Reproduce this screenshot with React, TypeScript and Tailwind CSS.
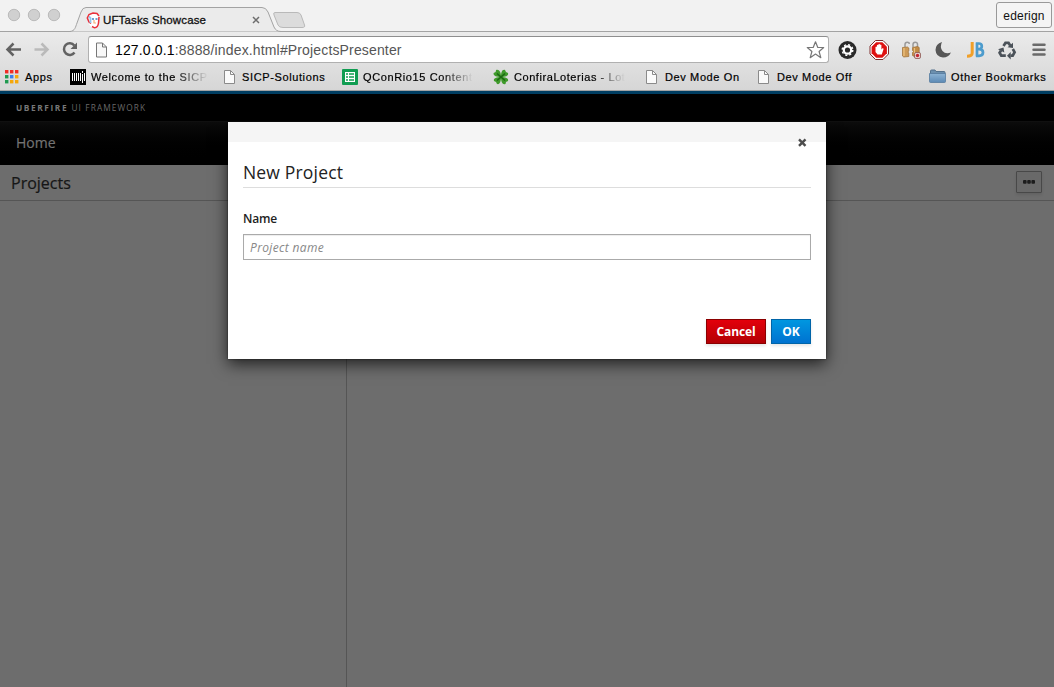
import React from 'react';

function PageIcon() {
  return (
    <svg width="16" height="16" viewBox="0 0 16 16" className="shrink-0">
      <path d="M2.500 1.500H8.500l4 4v9H2.500z" fill="#fafafa" stroke="#8a8a8a" />
      <path d="M8.500 1.500v4h4" fill="none" stroke="#8a8a8a" />
    </svg>
  );
}

function AppsIcon() {
  const colors = ['#f02c26', '#f02c26', '#f02c26', '#1f9a50', '#3b7ded', '#f5a70a', '#1f9a50', '#f5a70a', '#f5a70a'];
  return (
    <svg width="14" height="14" viewBox="0 0 14 14" className="shrink-0">
      {colors.map((c, i) => (
        <rect key={i} x={(i % 3) * 5} y={Math.floor(i / 3) * 5} width="3.4" height="3.4" fill={c} />
      ))}
    </svg>
  );
}

function MitIcon() {
  return (
    <svg width="16" height="16" viewBox="0 0 16 16" className="shrink-0">
      <rect width="16" height="16" fill="#000" />
      <path d="M2.500 4v8M4.500 4v8M6.500 4v8M8.500 4v8M10.500 4v8M12.500 2v2M12.500 5v9M14.500 4v8" stroke="#fff" strokeWidth="1" />
    </svg>
  );
}

function SheetIcon() {
  return (
    <svg width="16" height="16" viewBox="0 0 16 16" className="shrink-0">
      <rect width="16" height="16" rx="1" fill="#109d52" />
      <rect x="3" y="3" width="10" height="10" fill="#fff" />
      <path d="M4 5h2M7 5h5M4 8h2M7 8h5M4 11h2M7 11h5" stroke="#109d52" strokeWidth="1.700" />
    </svg>
  );
}

function CloverIcon() {
  return (
    <svg width="16" height="16" viewBox="0 0 16 16" className="shrink-0">
      <path d="M8 8C4 8 0 7 .6 4l2-1 .5-2c3-1 5 2 4.900 7zM8 8c0-4 1-8 4-7l1 2 2 1c1 3-3 4-7 4zM8 8c4 0 8 1 7 4l-2 1-.5 2c-3 1-4.500-2-4.500-7zM8 8c0 4-1 8-4 7l-1-2-2-1C0 9 4 8 8 8z" fill="#3f9a2b" />
      <path d="M4 4.500l8 7M12 4.500l-8 7" stroke="#1c6912" strokeWidth="1.600" />
    </svg>
  );
}

function FolderIcon() {
  return (
    <svg width="17" height="16" viewBox="0 0 17 16" className="shrink-0">
      <defs>
        <linearGradient id="folder" x1="0" y1="0" x2="0" y2="1">
          <stop offset="0" stopColor="#8db3d4" />
          <stop offset="1" stopColor="#5b89b4" />
        </linearGradient>
      </defs>
      <path d="M1.500 4V2q0-1 1-1h3.500l1 1.500h8q1 0 1 1V5h-14.500z" fill="#6b8fae" stroke="#54718c" />
      <path d="M.5 4.500h16v8q0 1-1 1h-14q-1 0-1-1z" fill="url(#folder)" stroke="#557b9e" strokeWidth=".8" />
    </svg>
  );
}

function TabStrip() {
  return (
    <div className="relative flex h-[32px] bg-[#f2f2f2]">
      <svg width="310" height="32" viewBox="0 0 310 32" className="absolute left-0 top-0">
        <path d="M70 31.500C75 31 75.500 27 77 23L81 12Q82.500 7.500 86 7.500H262Q266 7.500 268 12L274 27Q276 31.500 281 31.500V32H70z" fill="#ebebeb" stroke="#a3a3a3" />
        <path d="M275 12.500H297Q300 12.500 301 15L304.500 25Q305.500 27.500 302 27.500H283Q279 27.500 278 25L274 15Q273 12.500 275 12.500z" fill="#dcdcdc" stroke="#b9b9b9" />
        <g fill="#d0d0d0" stroke="#bababa">
          <circle cx="14" cy="15" r="5.700" />
          <circle cx="34" cy="15" r="5.700" />
          <circle cx="54" cy="15" r="5.700" />
        </g>
      </svg>
      <div className="absolute bottom-0 left-0 h-px w-[71px] bg-[#a3a3a3]" />
      <div className="absolute bottom-0 left-[280px] right-0 h-px bg-[#a3a3a3]" />
      <div className="relative ml-[86px] flex h-full w-[180px] items-center pt-[8px]">
        <svg width="15" height="17" viewBox="0 0 15 17" className="shrink-0">
          <path d="M3 3Q7 0 12 2Q13.500 4 13 9Q13 15 9 16Q5 16 3 12z" fill="#fff" />
          <path d="M5 11.500L3 10L1.300 6L3 2.500L7 1L11 1.500L13 4" fill="none" stroke="#e9303a" strokeWidth="1.500" />
          <path d="M13 5L12.500 11Q12 15.500 8.500 15.800L6 14.500" fill="none" stroke="#e9303a" strokeWidth="1.500" />
          <path d="M3 4.500L4.500 6V11" fill="none" stroke="#8cc6ef" strokeWidth="1.800" />
          <path d="M6 7h2M9.500 7h2" stroke="#4280c0" strokeWidth="1.300" />
          <path d="M8 8v3h2" fill="none" stroke="#f4ad78" strokeWidth="1.200" />
        </svg>
        <span className="ml-[2px] mt-px whitespace-nowrap text-[11.500px] font-normal tracking-[0.130px] text-[#111] [-webkit-text-stroke:0.3px_#111]">UFTasks Showcase</span>
        <svg width="8" height="8" viewBox="0 0 8 8" className="ml-auto mr-[6px]">
          <path d="M1 1l6 6M7 1L1 7" stroke="#6d6d6d" strokeWidth="1.500" />
        </svg>
      </div>
      <div className="ml-auto mr-[2px] mt-[2px] flex h-[26px] w-[56px] items-center justify-center rounded-[3px] border border-[#999] bg-[#f4f4f4] pt-px text-[12px] tracking-[0.2px] text-[#111]">ederign</div>
    </div>
  );
}

function Extensions() {
  return (
    <div className="ml-[8px] flex h-[20px] items-center gap-[12px]">
      <svg width="20" height="20" viewBox="0 0 20 20">
        <circle cx="10.500" cy="10" r="9" fill="#292929" />
        <circle cx="10.500" cy="10" r="3.700" fill="none" stroke="#fff" strokeWidth="2.200" />
        <circle cx="10.500" cy="10" r="5.300" fill="none" stroke="#fff" strokeWidth="1.400" strokeDasharray="2.080 2.080" />
      </svg>
      <svg width="20" height="20" viewBox="0 0 20 20">
        <path d="M6.500 .5h7.500L19.500 6v8L14 19.500H6.500L1 14V6z" fill="#fff" stroke="#803030" />
        <path d="M7.100 2.200h6.300l4.500 4.500v6.600l-4.500 4.500H7.100l-4.500-4.500V6.700z" fill="#de1111" />
        <path d="M6.500 10V7q.7-1 1.400 0V5.300q.8-1 1.500 0v-1q.8-1 1.500 0V5q.8-1 1.500 0v4.500l1-1.200q1.200-.2 1.200.8L12.800 14.500H8.500L6.500 12z" fill="#fff" />
      </svg>
      <svg width="20" height="20" viewBox="0 0 20 20">
        <path d="M4 7V4.500q0-2.300 2.200-2.300T8.200 4M12 7V4.500q0-2.300 2.200-2.300T16.500 4v3" fill="none" stroke="#9a9a9a" strokeWidth="1.500" />
        <path d="M1.500 7.500l5-.5 1.300 1v3l-1 1 1 1v3.500l-5 .5-1.300-1z" fill="#cd9a57" stroke="#9c6d32" strokeWidth=".7" />
        <path d="M3 8v8" stroke="#ecc27f" strokeWidth="1.300" />
        <path d="M11.500 7.500l5-1 1.700 1v8l-5 1-1.700-1v-3l1-1-1-1z" fill="#c18b46" stroke="#9c6d32" strokeWidth=".7" />
        <path d="M13.500 8v7" stroke="#ecc27f" strokeWidth="1.200" />
        <rect x="13.500" y="12.500" width="6" height="6" rx="1.500" fill="#e7d2d0" stroke="#8c5550" strokeWidth=".8" />
        <circle cx="16.500" cy="15.500" r="1.700" fill="#c42630" />
      </svg>
      <svg width="20" height="20" viewBox="0 0 20 20">
        <path d="M9 2Q2.500 4 2.500 10Q3 17 10 17.500Q15.500 17.500 18 12.500Q12.500 14.500 9.500 11Q6.500 7 9 2z" fill="#575757" />
      </svg>
      <svg width="20" height="20" viewBox="0 0 20 20">
        <path d="M7.200 2v11q0 3.200-5.200 3.200" fill="none" stroke="#f0a02a" strokeWidth="3" />
        <path d="M12 2.500V16.500M11 3.500h2.800q3 0 3 2.700T14 9.200h-2.500M14 9.200q4 0 4 3.200T14 15.800h-3" fill="none" stroke="#4d9ccd" strokeWidth="2.700" />
      </svg>
      <svg width="20" height="20" viewBox="0 0 20 20" fill="none" stroke="#4b5259" strokeWidth="2.700">
        <path d="M6.500 6L8.500 2.800h3L13.200 5.500" />
        <path d="M15.800 9L17.600 12.200 15.700 15.700H13.500" />
        <path d="M8.800 15.700H4.300L2.600 12.700 4 10.500" />
        <path d="M10.500 7.300l5.500.7V2.800zM13.700 12v7.500L10 15.700zM1 9.200l5.500-1.700.8 5z" fill="#4b5259" stroke="none" />
      </svg>
      <svg width="20" height="20" viewBox="0 0 20 20">
        <path d="M4.500 4.800h11M4.500 9.700h11M4.500 14.600h11" stroke="#6a6a6a" strokeWidth="2.500" strokeLinecap="round" />
      </svg>
    </div>
  );
}

function Toolbar() {
  return (
    <div className="flex h-[35px] items-center">
      <svg width="88" height="35" viewBox="0 0 88 35" className="shrink-0" fill="none">
        <path d="M21 17.500H8M13.500 11.500l-6 6 6 6" stroke="#626262" strokeWidth="2.500" />
        <path d="M34.500 17.500H47M41.500 11.500l6 6-6 6" stroke="#bababa" strokeWidth="2.500" />
        <path d="M74.300 13.500A5.800 5.800 0 1 0 74.500 20.500" stroke="#626262" strokeWidth="2.500" />
        <path d="M77 10.500v6.500h-6.500z" fill="#626262" />
      </svg>
      <div className="flex h-[27px] w-[741px] shrink-0 items-center rounded-[3px] border border-[#b0b0b0] border-t-[#8e8e8e] bg-white pl-[6px] pr-[2px]">
        <svg width="13" height="16" viewBox="0 0 13 16" className="shrink-0">
          <path d="M1.500 1h6l4 4v10h-10z" fill="#f8f8f8" stroke="#777" />
          <path d="M7.500 1v4h4" fill="none" stroke="#777" />
        </svg>
        <span className="ml-[7px] mt-px whitespace-nowrap text-[14px] tracking-[0.150px] text-[#555]"><span className="text-black">127.0.0.1</span>:8888/index.html#ProjectsPresenter</span>
        <svg width="20" height="20" viewBox="0 0 20 20" className="ml-auto">
          <path d="M9.500 1.800l2.300 5.700h5.900l-4.600 4 1.700 6.200-5.300-3.600-5.300 3.600 1.700-6.200-4.600-4h5.900z" fill="#fff" stroke="#777" strokeWidth="1.200" strokeLinejoin="round" />
        </svg>
      </div>
      <Extensions />
    </div>
  );
}

function Bookmark({ icon, label, box, text, fade }: { icon: React.ReactNode; label: string; box: string; text: string; fade?: boolean }) {
  return (
    <div className={`flex h-full shrink-0 items-center ${box}`}>
      {icon}
      <span className={`whitespace-nowrap text-[11px] text-black [-webkit-text-stroke:0.2px_#000] ${text} ${fade ? '[mask-image:linear-gradient(to_right,black_72%,transparent)]' : ''}`}>{label}</span>
    </div>
  );
}

function BookmarkBar() {
  return (
    <div className="flex h-[20px] items-center pl-[5px]">
      <Bookmark icon={<AppsIcon />} label="Apps" box="w-[65px]" text="ml-[6px] tracking-[0.65px]" />
      <Bookmark icon={<MitIcon />} label="Welcome to the SICP" box="w-[152px]" text="ml-[5px] tracking-[0.62px]" fade />
      <Bookmark icon={<PageIcon />} label="SICP-Solutions" box="w-[120px]" text="ml-[4px] tracking-[0.62px]" />
      <Bookmark icon={<SheetIcon />} label="QConRio15 Content" box="w-[151px]" text="ml-[5px] tracking-[0.62px]" fade />
      <Bookmark icon={<CloverIcon />} label="ConfiraLoterias - Lot" box="w-[151px]" text="ml-[5px] tracking-[0.56px]" fade />
      <Bookmark icon={<PageIcon />} label="Dev Mode On" box="w-[112px]" text="ml-[5px] tracking-[0.62px]" />
      <Bookmark icon={<PageIcon />} label="Dev Mode Off" box="w-[173px]" text="ml-[5px] tracking-[0.62px]" />
      <Bookmark icon={<FolderIcon />} label="Other Bookmarks" box="" text="ml-[5px] tracking-[0.65px]" />
    </div>
  );
}

function NewProjectDialog() {
  return (
    <div className="absolute left-[228px] top-[122px] flex h-[237px] w-[598px] flex-col bg-white shadow-[0_5px_15px_rgba(0,0,0,0.7),0_0_2px_rgba(0,0,0,0.6)]">
      <div className="flex h-[20px] shrink-0 justify-end bg-[#f5f5f5] pr-[19px] pt-[16px]">
        <svg width="10" height="10" viewBox="0 0 10 10" className="shrink-0">
          <path d="M2 1.300l6.500 6.500M8.500 1.300L2 7.800" stroke="#4d4d4d" strokeWidth="2.400" />
        </svg>
      </div>
      <div className="flex grow flex-col px-[15px] pb-[15px]">
        <h2 className="mt-[18px] h-[28px] border-b border-[#ddd] text-[17.500px] leading-[25px] tracking-[0.180px] text-[#222]">New Project</h2>
        <label className="mt-[20px] h-[22px] text-[12px] font-semibold leading-[22px] tracking-[-0.150px] text-[#222]">Name</label>
        <input placeholder="Project name" className="mt-[4px] h-[26px] border border-[#aaa] px-[6px] text-[12px] italic tracking-[0.350px] shadow-[inset_0_1px_1px_rgba(0,0,0,0.075)] placeholder:text-[#888]" />
        <div className="mt-auto flex justify-end gap-[5px] text-[12px] font-bold tracking-[-0.100px] text-white">
          <button className="h-[25px] w-[60px] border border-[#8b0000] bg-linear-to-b from-[#e3000b] to-[#b30005] leading-none shadow-[0_2px_3px_rgba(0,0,0,0.1)]">Cancel</button>
          <button className="h-[25px] w-[40px] border border-[#0064a8] bg-linear-to-b from-[#0097e0] to-[#0072d0] leading-none shadow-[0_2px_3px_rgba(0,0,0,0.1)]">OK</button>
        </div>
      </div>
    </div>
  );
}

export default function App() {
  return (
    <div className="relative flex h-[687px] w-[1054px] flex-col overflow-hidden bg-[#6d6d6d] font-['Open_Sans','Noto_Sans',sans-serif]">
      <header className="shrink-0 font-['Liberation_Sans',Arial,sans-serif]">
        <TabStrip />
        <div className="h-[59px] border-b border-[#a2a2a2] bg-linear-to-b from-[#ebebeb] to-[#d6d6d6]">
          <Toolbar />
          <BookmarkBar />
        </div>
      </header>
      <div className="h-[30px] shrink-0 border-t-[3px] border-[#003d61] bg-black pl-[16px] text-[8.300px] leading-[27px] tracking-[1.100px] text-[#686868]">
        <span className="font-bold tracking-[1.600px] text-[#777]">UBERFIRE</span> UI FRAMEWORK
      </div>
      <nav className="h-[44px] shrink-0 border-t border-[#101010] bg-linear-to-b from-[#0c0c0c] to-black pl-[16px] text-[14px] leading-[41px] text-[#737373] [-webkit-text-stroke:0.2px_#737373]">Home</nav>
      <div className="flex h-[36px] shrink-0 items-center justify-between border-b border-[#555] pl-[11px] pr-[12px]">
        <h1 className="text-[16px] text-[#161616] [-webkit-text-stroke:0.2px_#161616]">Projects</h1>
        <button className="mb-[2px] flex h-[22px] w-[26px] items-center justify-center rounded-[1px] border border-[#484848] bg-[#696969] shadow-[0_2px_3px_rgba(0,0,0,0.1)]">
          <svg width="12" height="4" viewBox="0 0 12 4" fill="#1c1c1c">
            <rect width="3.600" height="3.800" rx="1" />
            <rect x="4.200" width="3.600" height="3.800" rx="1" />
            <rect x="8.400" width="3.600" height="3.800" rx="1" />
          </svg>
        </button>
      </div>
      <main className="flex grow">
        <aside className="w-[347px] border-r border-[#555]" />
        <section className="grow" />
      </main>
      <NewProjectDialog />
    </div>
  );
}
